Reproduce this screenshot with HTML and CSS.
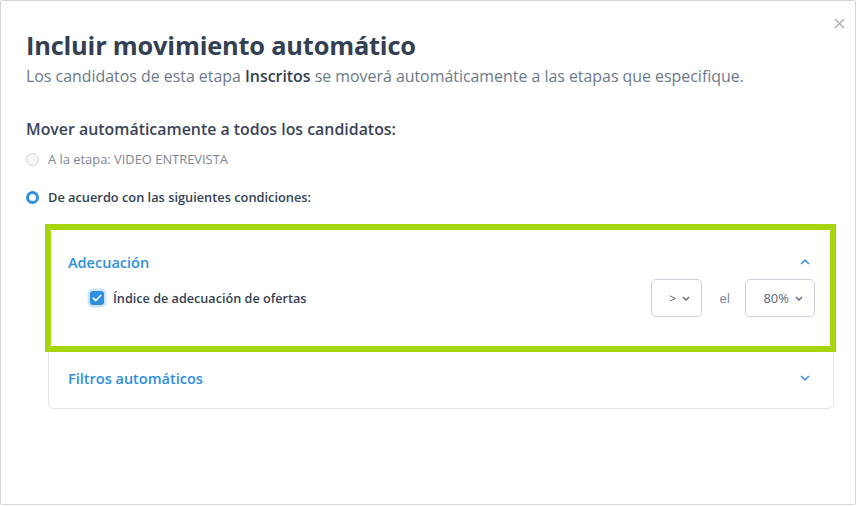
FILE: index.html
```html
<!DOCTYPE html>
<html lang="es">
<head>
<meta charset="utf-8">
<title>Incluir movimiento automático</title>
<link rel="stylesheet" href="styles.css">
</head>
<body>
<div class="modal">
  <button class="close" aria-label="Cerrar">
    <svg width="11" height="11" viewBox="0 0 11 11"><path d="M1 1L10 10M10 1L1 10" stroke="#aeb5bf" stroke-width="1.6" fill="none"/></svg>
  </button>
  <h1 class="title">Incluir movimiento automático</h1>
  <p class="subtitle">Los candidatos de esta etapa <strong>Inscritos</strong> se moverá automáticamente a las etapas que especifique.</p>

  <h2 class="section-title">Mover automáticamente a todos los candidatos:</h2>

  <label class="radio-row">
    <span class="radio"></span>
    <span class="radio-label">A la etapa: VIDEO ENTREVISTA</span>
  </label>
  <label class="radio-row radio-row--checked">
    <span class="radio radio--checked"></span>
    <span class="radio-label radio-label--strong">De acuerdo con las siguientes condiciones:</span>
  </label>

  <div class="card">
    <div class="acc-item acc-item--open">
      <div class="acc-head">
        <span class="acc-title">Adecuación</span>
        <svg class="chev" width="10" height="6" viewBox="0 0 10 6"><path d="M1 5L5 1.2L9 5" stroke="#3a93e0" stroke-width="1.6" fill="none"/></svg>
      </div>
      <div class="cond-row">
        <span class="checkbox">
          <svg width="10" height="8" viewBox="0 0 10 8"><path d="M1.3 4.2L3.8 6.5L8.7 1.5" stroke="#fff" stroke-width="1.7" fill="none" stroke-linecap="round" stroke-linejoin="round"/></svg>
        </span>
        <span class="cond-label">Índice de adecuación de ofertas</span>
        <span class="spacer"></span>
        <span class="select select--op">&gt;
          <svg width="8" height="5" viewBox="0 0 8 5"><path d="M1 1L4 4L7 1" stroke="#5d6676" stroke-width="1.3" fill="none"/></svg>
        </span>
        <span class="el">el</span>
        <span class="select select--pct">80%
          <svg width="8" height="5" viewBox="0 0 8 5"><path d="M1 1L4 4L7 1" stroke="#5d6676" stroke-width="1.3" fill="none"/></svg>
        </span>
      </div>
      <div class="highlight"></div>
    </div>
    <div class="acc-item">
      <div class="acc-head">
        <span class="acc-title">Filtros automáticos</span>
        <svg class="chev" width="10" height="6" viewBox="0 0 10 6"><path d="M1 1L5 4.8L9 1" stroke="#3a93e0" stroke-width="1.6" fill="none"/></svg>
      </div>
    </div>
  </div>
</div>
</body>
</html>
```

FILE: styles.css
```css
* { box-sizing: border-box; }
html, body { margin: 0; padding: 0; background: #fff; }
body { font-family: "Source Sans Pro", "Open Sans", Lato, sans-serif; color: #333f52; }

.modal {
  position: relative;
  width: 856px;
  height: 505px;
  border: 1px solid #d6d6d6;
  border-radius: 2px;
  padding: 28px 26px 0 25px;
}

.close {
  position: absolute;
  top: 15px;
  right: 9px;
  width: 14px;
  height: 14px;
  padding: 0;
  border: 0;
  background: transparent;
  display: flex;
  align-items: center;
  justify-content: center;
}

.title {
  margin: 0;
  font-size: 25.4px;
  line-height: 32px;
  font-weight: 700;
  color: #333f52;
  letter-spacing: -0.2px;
}

.subtitle {
  margin: 3px 0 0;
  font-size: 15.9px;
  line-height: 24px;
  color: #6c788b;
}
.subtitle strong { color: #333f52; font-weight: 600; }

.section-title {
  margin: 29px 0 0;
  font-size: 15.9px;
  line-height: 24px;
  font-weight: 600;
  color: #3b4457;
}

.radio-row {
  display: flex;
  align-items: center;
  gap: 9px;
  height: 20px;
  margin-top: 8px;
}
.radio-row--checked { margin-top: 18px; }

.radio {
  width: 13px;
  height: 13px;
  border-radius: 50%;
  border: 1px solid #cfd3d9;
  background: #f6f7f9;
  flex: none;
}
.radio--checked {
  border: 3.5px solid #2b8fe2;
  background: #fff;
}

.radio-label {
  font-size: 12.9px;
  color: #7c8594;
}
.radio-label--strong {
  font-size: 12.8px;
  font-weight: 600;
  color: #333f52;
}

.card {
  margin: 20px 0 0 22px;
  width: 786px;
  border: 1px solid #e3e5e8;
  border-radius: 6px;
}

.acc-item {
  position: relative;
  padding: 16px 19px 18px 19px;
}
.acc-item--open { padding-top: 22px; padding-bottom: 33px; }

.acc-head {
  display: flex;
  align-items: center;
  justify-content: space-between;
  height: 24px;
}
.acc-title {
  font-size: 14.5px;
  font-weight: 600;
  color: #2d8fdd;
}
.chev { margin-right: 4px; }

.cond-row {
  display: flex;
  align-items: center;
  margin-top: 5px;
  height: 38px;
  padding-left: 22px;
}

.checkbox {
  width: 14px;
  height: 14px;
  border-radius: 3px;
  background: #2b8fe2;
  box-shadow: 0 0 0 2.5px #cfe3f8;
  display: flex;
  align-items: center;
  justify-content: center;
  flex: none;
}
.cond-label {
  margin-left: 9px;
  font-size: 12.65px;
  font-weight: 600;
  color: #333f52;
}
.spacer { flex: 1; }

.select {
  display: flex;
  align-items: center;
  justify-content: flex-end;
  gap: 6px;
  height: 38px;
  border: 1px solid #cdd2da;
  border-radius: 5px;
  font-size: 13px;
  color: #5d6676;
  padding-right: 11px;
}
.select--op { width: 51px; }
.select--pct { width: 70px; margin-right: -1px; }
.el {
  margin: 0 15px 0 17px;
  font-size: 13px;
  color: #7c8594;
}

.highlight {
  position: absolute;
  left: -4px;
  right: -3px;
  top: -4px;
  bottom: -2px;
  border: 6px solid #a5d50a;
  pointer-events: none;
}
```
